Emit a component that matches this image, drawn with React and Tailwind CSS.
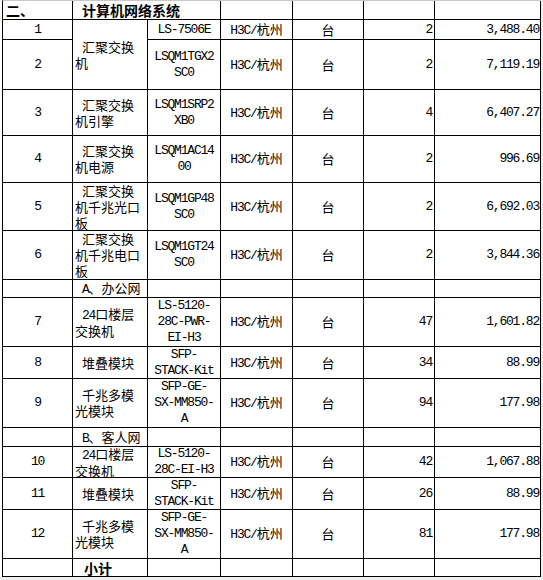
import React from 'react';

const cjk = "font-['Noto_Sans_CJK_SC',sans-serif] text-black";
const mono = "font-['Liberation_Mono',monospace] tracking-[-1.2px] text-black";
const cell = 'border-r border-b border-black bg-white';

// ascii runs in the narrow mono face, the rest in the CJK face
const Txt = ({ s }) => {
  const parts = s.match(/[\x00-\x7f]+|[^\x00-\x7f]+/g) || [];
  return parts.map((p, i) =>
    /^[\x00-\x7f]/.test(p) ? (
      <span key={i} className={mono}>{p}</span>
    ) : (
      <span key={i} className={cjk}>{p}</span>
    )
  );
};

const NameCell = ({ lines, span = false }) => (
  <div className={`${cell} flex flex-col justify-center pl-[2px] leading-[15px] ${span ? 'row-span-2' : ''}`}>
    {lines.map((l, i) => (
      <div key={i} className={i === 0 ? 'pl-[7px]' : ''}>
        <Txt s={l} />
      </div>
    ))}
  </div>
);

const items = [
  { no: '1', name: ['汇聚交换', '机'], span: true, model: ['LS-7506E'], qty: 2, price: '3,488.40' },
  { no: '2', model: ['LSQM1TGX2', 'SC0'], qty: 2, price: '7,119.19' },
  { no: '3', name: ['汇聚交换', '机引擎'], model: ['LSQM1SRP2', 'XB0'], qty: 4, price: '6,407.27' },
  { no: '4', name: ['汇聚交换', '机电源'], model: ['LSQM1AC14', '00'], qty: 2, price: '996.69' },
  { no: '5', name: ['汇聚交换', '机千兆光口', '板'], model: ['LSQM1GP48', 'SC0'], qty: 2, price: '6,692.03' },
  { no: '6', name: ['汇聚交换', '机千兆电口', '板'], model: ['LSQM1GT24', 'SC0'], qty: 2, price: '3,844.36' },
  { section: 'A、办公网' },
  { no: '7', name: ['24口楼层', '交换机'], model: ['LS-5120-', '28C-PWR-', 'EI-H3'], qty: 47, price: '1,601.82' },
  { no: '8', name: ['堆叠模块'], model: ['SFP-', 'STACK-Kit'], qty: 34, price: '88.99' },
  { no: '9', name: ['千兆多模', '光模块'], model: ['SFP-GE-', 'SX-MM850-', 'A'], qty: 94, price: '177.98' },
  { section: 'B、客人网' },
  { no: '10', name: ['24口楼层', '交换机'], model: ['LS-5120-', '28C-EI-H3'], qty: 42, price: '1,067.88' },
  { no: '11', name: ['堆叠模块'], model: ['SFP-', 'STACK-Kit'], qty: 26, price: '88.99' },
  { no: '12', name: ['千兆多模', '光模块'], model: ['SFP-GE-', 'SX-MM850-', 'A'], qty: 81, price: '177.98' },
];

const Empty = () => <div className={cell} />;

export default function App() {
  return (
    <div className="w-[543px] h-[580px] bg-[#f0f0f0] text-black text-[13px] leading-[16px]">
      <div className="w-[541px] bg-white pl-[2px]">
        <div className="grid grid-cols-[70px_75px_73px_72px_71px_71px_106px] grid-rows-[19px_20px_50px_46px_47px_48px_49px_18px_49px_32px_49px_19px_31px_32px_49px_18px] border-l border-t border-l-black border-t-[#c8c8c8]">
          {/* section title */}
          <div className={`${cell} flex items-center pl-[3px] font-bold text-[14px] ${cjk}`}>二、</div>
          <div className={`${cell} col-span-2 flex items-center pl-[9px] font-bold text-[14px] ${cjk}`}>计算机网络系统</div>
          <Empty />
          <Empty />
          <Empty />
          <Empty />

          {items.map((r, i) =>
            r.section ? (
              <React.Fragment key={i}>
                <Empty />
                <NameCell lines={[r.section]} />
                <Empty />
                <Empty />
                <Empty />
                <Empty />
                <Empty />
              </React.Fragment>
            ) : (
              <React.Fragment key={i}>
                <div className={`${cell} flex items-center justify-center ${mono}`}>{r.no}</div>
                {r.name && <NameCell lines={r.name} span={r.span} />}
                <div className={`${cell} flex flex-col items-center justify-center ${mono}`}>
                  {r.model.map((m) => (
                    <div key={m}>{m}</div>
                  ))}
                </div>
                <div className={`${cell} flex items-center justify-center`}>
                  <div>
                    <Txt s="H3C/杭州" />
                  </div>
                </div>
                <div className={`${cell} flex items-center justify-center ${cjk}`}>台</div>
                <div className={`${cell} flex items-center justify-end pr-[2px] ${mono}`}>{r.qty}</div>
                <div className={`${cell} flex items-center justify-end pr-[1px] ${mono}`}>{r.price}</div>
              </React.Fragment>
            )
          )}

          {/* subtotal */}
          <Empty />
          <div className={`${cell} flex items-center pl-[11px] font-bold text-[14px] ${cjk}`}>小计</div>
          <Empty />
          <Empty />
          <Empty />
          <Empty />
          <Empty />
        </div>
      </div>
    </div>
  );
}
